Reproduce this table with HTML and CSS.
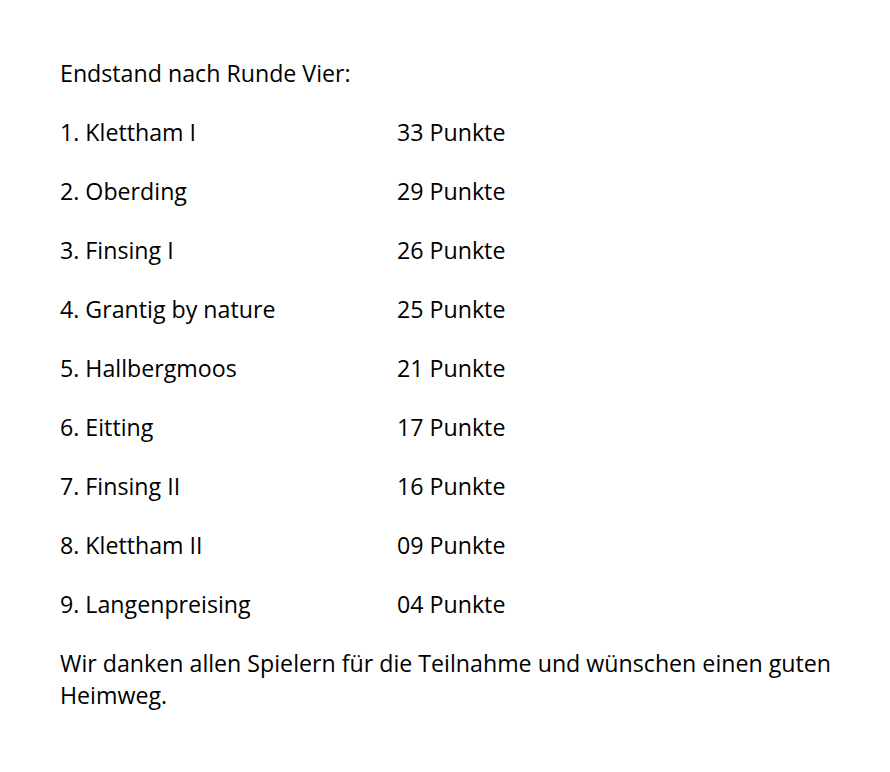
FILE: index.html
```html
<!DOCTYPE html>
<html lang="de">
<head>
<meta charset="utf-8">
<link rel="stylesheet" href="styles.css">
</head>
<body>
<main class="doc">
  <p class="intro">Endstand nach Runde Vier:</p>
  <div class="standings">
    <span class="team">1. Klettham I</span><span class="pts">33 Punkte</span>
    <span class="team">2. Oberding</span><span class="pts">29 Punkte</span>
    <span class="team">3. Finsing I</span><span class="pts">26 Punkte</span>
    <span class="team">4. Grantig by nature</span><span class="pts">25 Punkte</span>
    <span class="team">5. Hallbergmoos</span><span class="pts">21 Punkte</span>
    <span class="team">6. Eitting</span><span class="pts">17 Punkte</span>
    <span class="team">7. Finsing II</span><span class="pts">16 Punkte</span>
    <span class="team">8. Klettham II</span><span class="pts">09 Punkte</span>
    <span class="team">9. Langenpreising</span><span class="pts">04 Punkte</span>
  </div>
  <p class="outro">Wir danken allen Spielern für die Teilnahme und wünschen einen guten Heimweg.</p>
</main>
</body>
</html>
```
FILE: styles.css
```css
html, body {
  margin: 0;
  padding: 0;
  background: #ffffff;
}
body {
  font-family: "Open Sans", "Noto Sans", sans-serif;
  font-size: 23.2px;
  line-height: 32px;
  color: #000000;
}
.doc {
  padding: 57px 20px 0 60px;
  display: flex;
  flex-direction: column;
  gap: 27px;
}
.intro, .outro {
  margin: 0;
}
.standings {
  display: grid;
  grid-template-columns: 337px auto;
  row-gap: 27px;
}
.team, .pts {
  white-space: nowrap;
}
```
